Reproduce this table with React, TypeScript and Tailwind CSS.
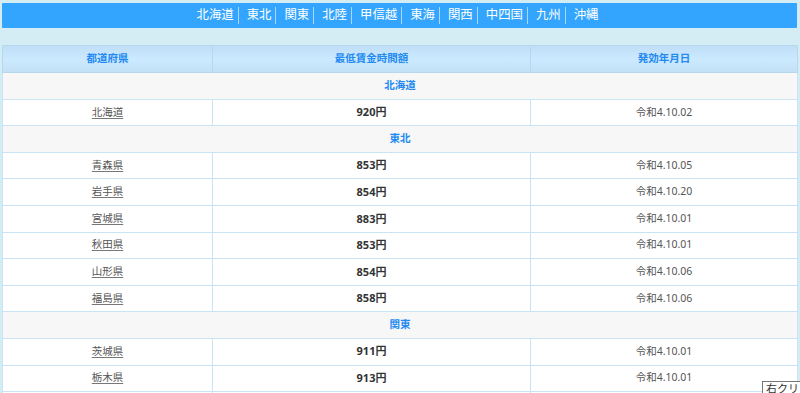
import React from "react";

const regions = ["北海道", "東北", "関東", "北陸", "甲信越", "東海", "関西", "中四国", "九州", "沖縄"];

type Row =
  | { kind: "section"; name: string }
  | { kind: "data"; pref: string; wage: string; date: string };

const rows: Row[] = [
  { kind: "section", name: "北海道" },
  { kind: "data", pref: "北海道", wage: "920円", date: "令和4.10.02" },
  { kind: "section", name: "東北" },
  { kind: "data", pref: "青森県", wage: "853円", date: "令和4.10.05" },
  { kind: "data", pref: "岩手県", wage: "854円", date: "令和4.10.20" },
  { kind: "data", pref: "宮城県", wage: "883円", date: "令和4.10.01" },
  { kind: "data", pref: "秋田県", wage: "853円", date: "令和4.10.01" },
  { kind: "data", pref: "山形県", wage: "854円", date: "令和4.10.06" },
  { kind: "data", pref: "福島県", wage: "858円", date: "令和4.10.06" },
  { kind: "section", name: "関東" },
  { kind: "data", pref: "茨城県", wage: "911円", date: "令和4.10.01" },
  { kind: "data", pref: "栃木県", wage: "913円", date: "令和4.10.01" },
  { kind: "data", pref: "", wage: "", date: "" },
];

const font = { fontFamily: '"Noto Sans", "Noto Sans CJK JP", sans-serif' };

export default function App() {
  return (
    <div
      className="relative h-[393px] w-[800px] overflow-hidden bg-[#d4edf4] pl-[2px] pr-[3px] pt-[3px]"
      style={font}
    >
      <nav className="flex h-[25px] items-center justify-center rounded-[1px] bg-[#33a5fe]">
        {regions.map((r, i) => (
          <span
            key={r}
            className={
              "flex h-[17px] items-center text-[12.4px] leading-none text-white " +
              (i === 0 ? "pr-[4px] " : "pl-[8px] pr-[4px] ") +
              (i < regions.length - 1 ? "border-r border-[#a9d8fd]" : "")
            }
          >
            {r}
          </span>
        ))}
      </nav>

      <table className="mt-[17px] w-[795px] table-fixed border-collapse border border-[#bcdcf1] text-[10.5px]">
        <colgroup>
          <col className="w-[210px]" />
          <col className="w-[318px]" />
          <col className="w-[267px]" />
        </colgroup>
        <thead>
          <tr className="h-[27px] bg-gradient-to-b from-[#c0def6] via-[#cbe9ff] to-[#c2dff6]">
            {["都道府県", "最低賃金時間額", "発効年月日"].map((h) => (
              <th key={h} className="border border-[#b6d8ef] font-bold text-[#238af2]">
                {h}
              </th>
            ))}
          </tr>
        </thead>
        <tbody>
          {rows.map((row, i) =>
            row.kind === "section" ? (
              <tr key={i} className="h-[26.6px] bg-[#f7f7f7]">
                <td
                  colSpan={3}
                  className="border border-[#c9e4f5] text-center font-bold text-[#238af2]"
                >
                  {row.name}
                </td>
              </tr>
            ) : (
              <tr key={i} className="h-[26.6px] bg-white">
                <td className="border border-[#c9e4f5] text-center text-[#555555]">
                  <a className="underline decoration-[#777777] underline-offset-2">{row.pref}</a>
                </td>
                <td className="border border-[#c9e4f5] text-center text-[11px] font-bold text-[#333333]">
                  {row.wage}
                </td>
                <td className="border border-[#c9e4f5] text-center text-[#555555]">{row.date}</td>
              </tr>
            )
          )}
        </tbody>
      </table>

      <div className="absolute left-[762px] top-[381px] h-[16px] w-[60px] overflow-hidden whitespace-nowrap border border-[#767676] bg-white px-[3px] text-[11px] leading-[14px] text-[#333333]">
        右クリッ
      </div>
    </div>
  );
}
